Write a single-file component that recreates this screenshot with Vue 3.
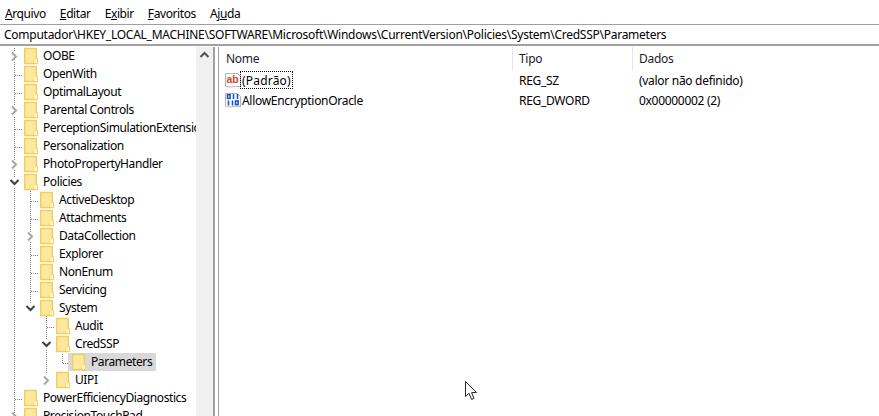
<script setup>
const rows = [
  { label: 'OOBE', depth: 0, exp: 'c' },
  { label: 'OpenWith', depth: 0 },
  { label: 'OptimalLayout', depth: 0 },
  { label: 'Parental Controls', depth: 0, exp: 'c' },
  { label: 'PerceptionSimulationExtensions', depth: 0 },
  { label: 'Personalization', depth: 0 },
  { label: 'PhotoPropertyHandler', depth: 0, exp: 'c' },
  { label: 'Policies', depth: 0, exp: 'o' },
  { label: 'ActiveDesktop', depth: 1 },
  { label: 'Attachments', depth: 1 },
  { label: 'DataCollection', depth: 1, exp: 'c' },
  { label: 'Explorer', depth: 1 },
  { label: 'NonEnum', depth: 1 },
  { label: 'Servicing', depth: 1 },
  { label: 'System', depth: 1, exp: 'o' },
  { label: 'Audit', depth: 2 },
  { label: 'CredSSP', depth: 2, exp: 'o' },
  { label: 'Parameters', depth: 3, selected: true },
  { label: 'UIPI', depth: 2, exp: 'c' },
  { label: 'PowerEfficiencyDiagnostics', depth: 0 },
  { label: 'PrecisionTouchPad', depth: 0, exp: 'c' }
]
const menus = [
  { key: 'A', rest: 'rquivo' },
  { key: 'E', rest: 'ditar' },
  { key: 'x', pre: 'E', rest: 'ibir' },
  { key: 'F', rest: 'avoritos' },
  { pre: 'Aj', key: 'u', rest: 'da' }
]
const values = [
  { name: '(Padrão)', type: 'REG_SZ', data: '(valor não definido)', kind: 'ab', focus: true },
  { name: 'AllowEncryptionOracle', type: 'REG_DWORD', data: '0x00000002 (2)', kind: 'bin' }
]
const indent = (d) => ({ width: d * 16 + 'px' })
</script>

<template>
  <div class="app">
    <div class="menubar">
      <span v-for="m in menus" :key="m.rest" class="menu">{{ m.pre }}<u>{{ m.key }}</u>{{ m.rest }}</span>
    </div>
    <div class="address">Computador\HKEY_LOCAL_MACHINE\SOFTWARE\Microsoft\Windows\CurrentVersion\Policies\System\CredSSP\Parameters</div>
    <div class="panes">
      <div class="tree">
        <div class="tree-list">
          <svg class="guides" width="196" height="370">
            <g transform="translate(0 1)" stroke="#808080" stroke-dasharray="1 1" shape-rendering="crispEdges" fill="none">
              <path d="M14.5 0V3M14.5 14V58M14.5 69V112M14.5 122V130M14.5 140V370" />
              <path d="M30.5 143V184M30.5 194V256" />
              <path d="M46.5 268V292M46.5 302V326" />
              <path d="M62.5 306V316" />
              <path d="M15 27H23M15 45H23M15 81H23M15 99H23M15 351H23" />
              <path d="M31 153H39M31 171H39M31 207H39M31 225H39M31 243H39" />
              <path d="M47 279H55" />
              <path d="M63 315H69" />
            </g>
          </svg>
          <div v-for="r in rows" :key="r.label" class="row">
            <span class="indent" :style="indent(r.depth)"></span>
            <span class="exp">
              <svg v-if="r.exp === 'c'" width="9" height="11" viewBox="0 0 9 11"><path d="M2 1.5 6 5.5 2 9.5" fill="none" stroke="#a6a6a6" stroke-width="2" /></svg>
              <svg v-else-if="r.exp === 'o'" width="11" height="9" viewBox="0 0 11 9"><path d="M1.5 2 5.5 6 9.5 2" fill="none" stroke="#404040" stroke-width="2" /></svg>
            </span>
            <span class="item" :class="{ selected: r.selected }">
              <svg class="folder" width="16" height="18" viewBox="0 0 16 18">
                <path d="M.7 1.5H12.3V16.5H.7Z" fill="#fde89e" stroke="#f1cf5f" stroke-width="1.4" />
                <path d="M12.3 11.5H13.7V16.5H9.5V14.5" fill="#fff3c4" stroke="#f1cf5f" />
              </svg>
              <span class="label">{{ r.label }}</span>
            </span>
          </div>
        </div>
        <div class="scrollbar">
          <svg class="arrow" width="17" height="17" viewBox="0 0 17 17"><path d="M4.5 10 8.5 6 12.5 10" fill="none" stroke="#505050" stroke-width="2" /></svg>
        </div>
      </div>
      <div class="splitter"></div>
      <div class="list">
        <div class="list-head">
          <span class="col c-name">Nome</span>
          <span class="col c-type">Tipo</span>
          <span class="col c-data">Dados</span>
        </div>
        <div v-for="v in values" :key="v.name" class="list-row">
          <span class="c-name cell">
            <svg class="val-icon" width="16" height="16" viewBox="0 0 16 16">
              <path d="M.5 1.5H12.5L15.5 4.5V15C12 13 5 16.5.5 14Z" fill="#fff" stroke="#b4b4b4" />
              <text v-if="v.kind === 'ab'" x="1.5" y="11" class="ab">ab</text>
              <g v-else fill="none" stroke="#2255c8" stroke-width="1.6">
                <rect x="2.5" y="2.8" width="2.6" height="3.6" /><path d="M8.5 2V7M12.5 2V7" />
                <path d="M3.5 8.5V13.5M7.5 8.5V13.5" /><rect x="10.5" y="9" width="2.6" height="3.6" />
              </g>
            </svg>
            <span class="name" :class="{ focus: v.focus }">{{ v.name }}</span>
          </span>
          <span class="c-type">{{ v.type }}</span>
          <span class="c-data">{{ v.data }}</span>
        </div>
        <svg class="cursor" width="14" height="21" viewBox="0 0 14 21">
          <path d="M1.5 1.5V16.5L5 13.2 7.6 19.5 10 18.4 7.6 12.6H12.5Z" fill="#fff" stroke="#222" />
        </svg>
      </div>
    </div>
  </div>
</template>

<style>
html, body { margin: 0; background: #fff; overflow: hidden; }
</style>

<style scoped>
.app {
  width: 879px;
  height: 416px;
  overflow: hidden;
  background: #fff;
  color: #000;
  font: 12px/16px "Noto Sans", "Open Sans", sans-serif;
  display: flex;
  flex-direction: column;
}
.menubar {
  height: 24px;
  display: flex;
  gap: 14px;
  padding: 6px 0 0 5px;
  box-sizing: border-box;
  background: #fff;
}
.menu { letter-spacing: -0.4px; }
.address {
  height: 22px;
  box-sizing: border-box;
  border-top: 1px solid #a0a0a0;
  border-bottom: 2px solid #a0a0a0;
  padding: 2px 0 0 4px;
  letter-spacing: -0.26px;
  white-space: nowrap;
  line-height: 16px;
}
.panes { flex: 1; display: flex; min-height: 0; padding-top: 1px; }
.tree { width: 213px; display: flex; flex: none; }
.tree-list { position: relative; width: 196px; overflow: hidden; }
.guides { position: absolute; left: 0; top: 0; }
.row { position: relative; height: 18px; display: flex; align-items: center; white-space: nowrap; }
.indent { flex: none; }
.exp { width: 24px; flex: none; display: flex; justify-content: center; align-items: center; padding-left: 4px; box-sizing: border-box; }
.item { display: flex; align-items: center; height: 18px; padding-right: 4px; }
.item.selected { background: #d9d9d9; margin-left: -4px; padding-left: 4px; }
.folder { flex: none; margin-right: 3px; }
.label { letter-spacing: -0.4px; }
.scrollbar { width: 17px; background: #f0f0f0; }
.arrow { display: block; }
.splitter { width: 3px; background: #fff; border-left: 2px solid #a0a0a0; border-right: 1px solid #a0a0a0; flex: none; }
.list { position: relative; flex: 1; min-width: 0; letter-spacing: -0.3px; }
.list-head { height: 23px; display: flex; align-items: flex-start; color: #1a1a2a; }
.col { height: 24px; line-height: 24px; box-sizing: border-box; border-right: 1px solid #e5e5e5; }
.c-name { width: 294px; padding-left: 7px; box-sizing: border-box; flex: none; }
.c-type { width: 120px; padding-left: 6px; box-sizing: border-box; flex: none; }
.c-data { flex: 1; padding-left: 6px; }
.col.c-data { border-right: 0; }
.list-row { height: 20px; display: flex; align-items: center; }
.list-row > .c-type, .list-row > .c-data { padding-top: 2px; }
.cell { display: flex; align-items: center; padding-left: 6px; }
.val-icon { flex: none; margin-right: -1px; }
.ab { font: bold 10.5px "Liberation Sans", sans-serif; fill: #d04a2a; letter-spacing: 0; }
.name { padding: 0 1px; height: 18px; box-sizing: border-box; line-height: 18px; border: 1px solid transparent; }
.name.focus { border: 1px dotted #000; border-radius: 1px; letter-spacing: 0.2px; }
.cursor { position: absolute; left: 245px; top: 333px; }
</style>
